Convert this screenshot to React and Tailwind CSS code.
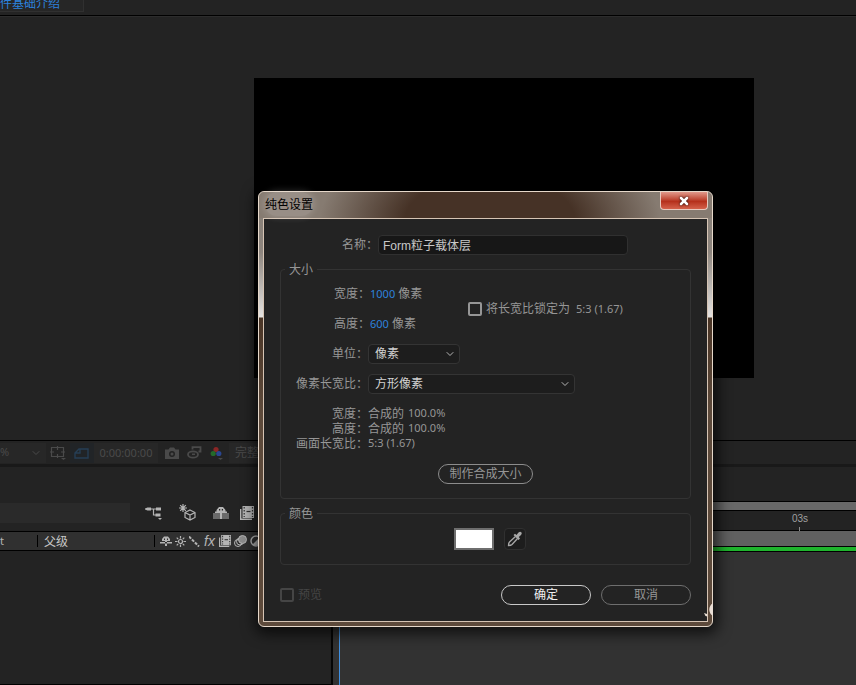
import { ChevronDown, X } from "lucide-react";

const sizeInfo = [
  { label: "宽度：", value: "合成的", number: "100.0%" },
  { label: "高度：", value: "合成的", number: "100.0%" },
  { label: "画面长宽比：", value: "", number: "5:3 (1.67)" }
];

function Num({ children, className = "" }) {
  return <span className={`font-['Noto_Sans'] text-[11px] ${className}`}>{children}</span>;
}

function ShyIcon({ className }) {
  return (
    <svg viewBox="0 0 12 10" className={className} fill="currentColor" fillRule="evenodd">
      <path d="M2 5V3l2-2.500h4L10 3v2ZM4 2.500V4h1V2.500ZM7 2.500V4h1V2.500Z" />
      <path d="M0 6h12v1.500H0ZM5 4h2v6H5Z" />
    </svg>
  );
}

function FilmIcon({ className }) {
  return (
    <svg viewBox="0 0 14 14" className={className} fill="none" stroke="currentColor">
      <path d="M.7 3v10.300H12" strokeWidth="1.400" />
      <path d="M2.500 0H14v12H2.500Z" fill="currentColor" stroke="none" />
      <path d="M6.500 5.500h4" stroke="#303030" strokeWidth="1.200" />
      <path d="M4.200 1v10M12.500 1v10" stroke="#303030" strokeWidth="1.200" strokeDasharray="1.500 1.500" />
    </svg>
  );
}

function TabBar() {
  return (
    <header className="h-4 shrink-0 border-b border-black">
      <div className="flex h-3 w-[84px] items-end border-r border-b border-[#303030] bg-[#262626]">
        <a href="#comp" className="whitespace-nowrap pb-px leading-3 text-[#2d82dc]">
          件基础介绍
        </a>
      </div>
    </header>
  );
}

function ViewerControls() {
  return (
    <div className="flex h-[27px] shrink-0 items-center border-t border-b-[3px] border-t-black border-b-[#191919] text-[#4a4a4a]">
      <button type="button" className="flex h-5 w-[46px] items-center justify-between bg-[#272727] pr-1">
        <Num>%</Num>
        <ChevronDown className="h-3 w-3" />
      </button>
      <svg viewBox="0 0 16 14" className="ml-1 h-3.5 w-4" fill="none" stroke="currentColor" strokeWidth="1.200">
        <path d="M1.500 1.500h12v9h-12ZM7.500 0v4M7.500 8v4M0 6h4M11 6h4" />
        <path d="M11 12h5l-2.500 2Z" fill="currentColor" stroke="none" />
      </svg>
      <div className="ml-1 flex h-5 w-6 items-center justify-center bg-[#212427] text-[#263e55]">
        <svg viewBox="0 0 16 12" className="h-3 w-4" fill="none" stroke="currentColor" strokeWidth="1.400">
          <path d="M1 11V6l4-4h9v9ZM1 6h5V2" />
        </svg>
      </div>
      <button type="button" className="h-5 w-16 bg-[#272727] text-center leading-5">
        <Num>0:00:00:00</Num>
      </button>
      <svg viewBox="0 0 14 12" className="ml-[7px] h-3 w-3.5" fill="currentColor" fillRule="evenodd">
        <path d="M0 2.500h3.500L5 .5h4l1.500 2H14V12H0ZM7 4a3 3 0 1 0 0 6 3 3 0 0 0 0-6Zm0 1.500a1.500 1.500 0 1 1 0 3 1.500 1.500 0 0 1 0-3Z" />
      </svg>
      <svg viewBox="0 0 15 13" className="ml-2 h-[13px] w-[15px]" fill="none" stroke="currentColor" strokeWidth="1.800">
        <path d="M5.500 3.500V1.200h8v4.300h-2" />
        <ellipse cx="6" cy="8.500" rx="5" ry="3.200" />
        <path d="M5 7.500h3v1.500H5Z" fill="currentColor" stroke="none" />
      </svg>
      <svg viewBox="0 0 13 14" className="ml-2 h-3.5 w-[13px]">
        <circle cx="6" cy="3.500" r="2.600" fill="#8a2626" />
        <circle cx="3.200" cy="7.500" r="2.600" fill="#246a2a" />
        <circle cx="8.800" cy="7.500" r="2.600" fill="#2a4690" />
        <path d="M8 12h5l-2.500 2Z" fill="currentColor" />
      </svg>
      <button type="button" className="ml-1.5 h-5 w-20 bg-[#272727] pl-1.5 text-left leading-5">
        完整
      </button>
    </div>
  );
}

function LayerColumns() {
  return (
    <div className="flex w-[333px] shrink-0 flex-col border-r-2 border-[#050505] text-[#b4b4b4]">
      <div className="flex h-16 items-end pb-2">
        <input aria-label="搜索图层" className="h-5 w-[130px] bg-[#2a2a2a] outline-none" />
        <div className="flex items-center gap-[17px] pb-0.5 pl-[15px]">
          <svg viewBox="0 0 17 14" className="h-3.5 w-[17px]" fill="none" stroke="currentColor" strokeWidth="1.200">
            <path d="M3 3h10M8.500 3v6h4" />
            <path d="M0 2.500 2.500 1.500H6v3H2.500L0 3.500ZM11 1.500h5v3h-5ZM10.500 7.500h5v3h-5Z" fill="currentColor" stroke="none" />
            <path d="M13 12h4l-2 2Z" fill="currentColor" stroke="none" />
          </svg>
          <svg viewBox="0 0 17 17" className="h-[17px] w-[17px]" fill="none" stroke="currentColor" strokeWidth="1.200">
            <path d="M4 0v8M0 4h8M1.200 1.200l5.600 5.600M6.800 1.200 1.200 6.800" />
            <path d="m11 6 5 2.500v5L11 16l-5-2.500v-5ZM6 8.500l5 2.500 5-2.500M11 11v5" />
          </svg>
          <svg viewBox="0 0 16 13" className="h-[13px] w-4" fillRule="evenodd">
            <path d="M0 7h16v6H0Z" fill="#6a6a6a" />
            <path d="M3.500 5.500V4L6 1h4l2.500 3v1.500H14V7H9v6H7V7H2V5.500ZM6 3v1.500h1.200V3ZM8.800 3v1.500H10V3Z" fill="currentColor" />
          </svg>
          <FilmIcon className="-ml-1.5 h-3.5 w-3.5" />
        </div>
      </div>
      <div className="flex h-5 items-center border-y border-black bg-[#303030]">
        <span className="w-[37px]"><Num>t</Num></span>
        <span className="h-3 w-px bg-black" />
        <span className="w-[116px] pt-0.5 pl-1.5 leading-4 text-[#c8c8c8]">父级</span>
        <span className="h-3 w-px bg-black" />
        <div className="flex items-center gap-[3px] pl-[5px]">
          <ShyIcon className="h-2.5 w-3" />
          <svg viewBox="0 0 11 11" className="h-[11px] w-[11px]" fill="none" stroke="currentColor" strokeWidth="1.200">
            <circle cx="5.500" cy="5.500" r="2" />
            <path d="M5.500 0v2.500M5.500 8.500V11M0 5.500h2.500M8.500 5.500H11M1.700 1.700l1.500 1.500M7.800 7.800l1.500 1.500M9.300 1.700 7.800 3.200M3.200 7.800 1.700 9.300" />
          </svg>
          <svg viewBox="0 0 11 11" className="h-[11px] w-[11px]" stroke="currentColor" strokeWidth="2">
            <path d="m0 .5 10 10" strokeDasharray="3 1.200" />
          </svg>
          <span className="w-[13px] pl-px font-['Liberation_Sans'] text-sm leading-4 italic">fx</span>
          <FilmIcon className="h-3 w-3" />
          <svg viewBox="0 0 13 12" className="h-3 w-[13px]" fill="none" stroke="currentColor">
            <circle cx="4" cy="8" r="3.500" />
            <circle cx="6" cy="6.500" r="3.500" />
            <circle cx="8.500" cy="4.500" r="4" fill="#8c8c8c" />
          </svg>
          <svg viewBox="0 0 12 12" className="h-3 w-3">
            <circle cx="6" cy="6" r="5" fill="none" stroke="currentColor" strokeWidth="1.400" />
            <path d="M9.500 2.500a5 5 0 0 1-7 7Z" fill="currentColor" />
          </svg>
        </div>
      </div>
      <div className="flex-1 border-b border-black" />
    </div>
  );
}

function TimeRuler() {
  return (
    <div className="flex flex-1 flex-col">
      <div className="mt-[34px] h-2.5 border-y border-black bg-[#686868]" />
      <div className="flex h-5 items-start justify-end border-b border-black pr-12 text-[#a0a0a0]">
        <div className="flex flex-col items-center">
          <span className="font-['Liberation_Sans'] text-[10px] leading-4">03s</span>
          <span className="h-1 w-px bg-[#8a8a8a]" />
        </div>
      </div>
      <div className="h-4 border-b border-black bg-[#606060]" />
      <div className="h-[5px] border-b border-black bg-[#1fb42d]" />
      <div className="flex flex-1 bg-[#323232] pl-1.5">
        <div className="flex-1 border-l border-[#3f8fe0]" />
      </div>
    </div>
  );
}

function Group({ title, className, children }) {
  return (
    <fieldset className={`min-w-0 rounded-sm border border-[#333333] ${className}`}>
      <legend className="ml-1 px-1 pt-px leading-4">{title}</legend>
      {children}
    </fieldset>
  );
}

function SelectField({ id, label, value, className }) {
  return (
    <div className="flex h-5 items-center">
      <label htmlFor={id} className="w-[87px] shrink-0 text-right">
        {label}
      </label>
      <div className={`relative ${className}`}>
        <select
          id={id}
          defaultValue={value}
          className="block h-5 w-full appearance-none rounded-sm border border-[#343434] bg-[#1d1d1d] px-1.5 leading-4 text-[#d2d2d2]"
        >
          <option>{value}</option>
        </select>
        <ChevronDown className="pointer-events-none absolute top-1 right-1 h-3 w-3 text-[#b4b4b4]" />
      </div>
    </div>
  );
}

function SizeField({ id, label, value }) {
  return (
    <div className="flex h-5 items-center">
      <label htmlFor={id} className="w-[89px] shrink-0 text-right">
        {label}
      </label>
      <button id={id} type="button" className="text-[#2d82dc]">
        <Num>{value}</Num>
      </button>
      <span className="pl-[3px]">像素</span>
    </div>
  );
}

function Pill({ children, className }) {
  return (
    <button type="button" className={`h-5 rounded-full text-center leading-4 ${className}`}>
      {children}
    </button>
  );
}

function SolidSettingsDialog() {
  return (
    <div
      role="dialog"
      aria-labelledby="dialog-title"
      className="absolute top-[191px] left-[258px] w-[455px] rounded-md border border-[#e6d8ca] bg-[linear-gradient(180deg,#867d74_0px,#8d857e_60px,#e4e2e0_125px,#4a3526_126px,#5d4a3b_220px,#5d4a3b_100%)] shadow-[1px_3px_14px_4px_rgba(0,0,0,0.65)]"
    >
      <div className="flex h-[26px] items-start justify-between rounded-t-md bg-[radial-gradient(ellipse_170px_90px_at_51%_110%,#463226_0%,#463226_50%,#867b71_100%)] pr-1 pl-1.5">
        <h2 id="dialog-title" className="rounded-full bg-white/15 pt-0.5 leading-[22px] text-black shadow-[0_0_6px_2px_rgba(255,255,255,0.15)]">
          纯色设置
        </h2>
        <button
          type="button"
          aria-label="关闭"
          className="flex h-[18px] w-12 items-center justify-center rounded-b border border-t-0 border-[#e8c8be] bg-linear-to-b from-[#e0988a] from-0% via-[#b52f1b] via-55% to-[#d4604a] text-white"
        >
          <X className="h-3 w-3 drop-shadow-[0_0_1px_#000000]" strokeWidth={5} />
        </button>
      </div>

      <form className="mx-1 mb-1 border border-[#d6c4b4] bg-[#232323] px-4 pt-4 pb-4 text-[#969696]">
        <div className="flex h-5 items-center">
          <label htmlFor="solid-name" className="w-[98px] shrink-0 text-right">
            名称：
          </label>
          <input
            id="solid-name"
            defaultValue="Form粒子载体层"
            className="mr-[63px] h-5 min-w-0 flex-1 rounded-sm border border-[#303030] bg-[#171717] px-1 pb-0.5 text-[#c8c8c8] outline-none"
          />
        </div>

        <Group title="大小" className="mt-1.5 pb-3.5">
          <div className="mt-1.5 flex items-center">
            <div className="flex w-[187px] flex-col gap-2.5">
              <SizeField id="solid-width" label="宽度：" value="1000" />
              <SizeField id="solid-height" label="高度：" value="600" />
            </div>
            <label className="flex items-center gap-1">
              <input type="checkbox" className="h-3.5 w-3.5 appearance-none rounded-xs border-2 border-[#969696]" />
              <span>将长宽比锁定为</span>
              <Num className="pl-0.5">5:3 (1.67)</Num>
            </label>
          </div>
          <div className="mt-2.5 flex flex-col gap-2.5">
            <SelectField id="units" label="单位：" value="像素" className="w-[92px]" />
            <SelectField id="pixel-aspect" label="像素长宽比：" value="方形像素" className="w-[207px]" />
          </div>
          <dl className="mt-3">
            {sizeInfo.map((row) => (
              <div key={row.label} className="flex h-[15px] items-center">
                <dt className="w-[87px] text-right">{row.label}</dt>
                <dd className="flex items-center gap-1">
                  {row.value && <span>{row.value}</span>}
                  <Num>{row.number}</Num>
                </dd>
              </div>
            ))}
          </dl>
          <div className="mt-[13px] flex justify-center">
            <Pill className="w-[95px] border border-[#8c8c8c]">制作合成大小</Pill>
          </div>
        </Group>

        <Group title="颜色" className="mt-1.5 pb-3.5">
          <div className="mt-1.5 flex items-center justify-center gap-2.5 pl-2">
            <button type="button" aria-label="纯色" className="h-[22px] w-10 border-2 border-[#6e6e6e] bg-white" />
            <button
              type="button"
              aria-label="吸管"
              className="flex h-[22px] w-[22px] items-center justify-center rounded-sm border border-[#303030] bg-[#1d1d1d] text-[#a8a8a8]"
            >
              <svg viewBox="0 0 16 16" className="h-4 w-4" fill="none" stroke="currentColor" strokeWidth="1.300">
                <path d="M8.500 5.500 2.500 11c-1 1-1 2-1 3.500 1.500 0 2.500 0 3.500-1l5.500-6" />
                <path d="m6.500 4 1.500-1.300L9.500 4l2-2.500c2-2.200 4.500.3 2.500 2.500L11.800 6l1.200 1.500L11.500 9Z" fill="currentColor" stroke="none" />
              </svg>
            </button>
          </div>
        </Group>

        <div className="mt-5 flex items-center">
          <label className="flex items-center gap-1 text-[#454545]">
            <input type="checkbox" disabled className="h-3.5 w-3.5 appearance-none rounded-xs border-2 border-[#454545]" />
            <span>预览</span>
          </label>
          <div className="ml-auto flex gap-2.5">
            <Pill className="w-[90px] border border-[#c8c8c8] text-[#f0f0f0]">确定</Pill>
            <Pill className="w-[90px] border border-[#6e6e6e]">取消</Pill>
          </div>
        </div>
      </form>
      <svg viewBox="0 0 10 20" className="absolute -right-px bottom-1 h-5 w-2.5" fill="#e8ddd4">
        <path d="M10 1C5 4 5 11 10 14ZM1 11l3 1 .5 2.500-2-.5Z" />
      </svg>
    </div>
  );
}

export default function App() {
  return (
    <main className="relative flex min-h-screen flex-col overflow-hidden bg-[#232323] font-['Liberation_Sans','Noto_Sans_CJK_SC',sans-serif] text-xs">
      <TabBar />
      <section className="flex-1 border-t border-[#2c2c2c] pt-[61px] pl-[254px]">
        <div className="h-[300px] w-[500px] bg-black" />
      </section>
      <ViewerControls />
      <section className="flex h-[218px] shrink-0">
        <LayerColumns />
        <TimeRuler />
      </section>
      <SolidSettingsDialog />
    </main>
  );
}
